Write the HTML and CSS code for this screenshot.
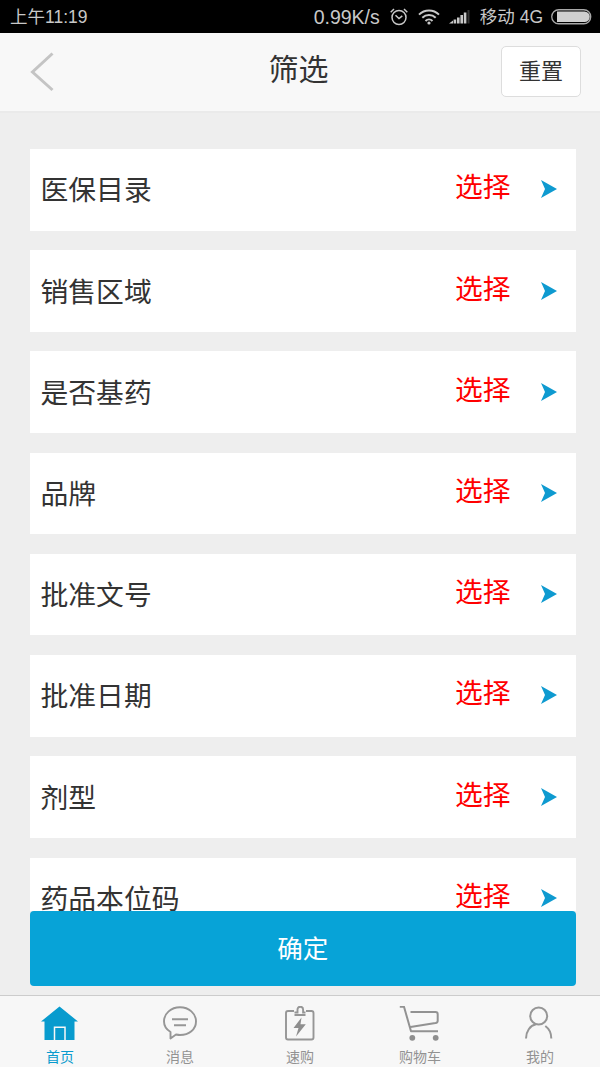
FILE: index.html
```html
<!DOCTYPE html>
<html lang="zh-CN">
<head>
<meta charset="utf-8">
<title>筛选</title>
<link rel="stylesheet" href="styles.css">
</head>
<body>
<div class="app">
  <div class="status">
    <span class="time">上午11:19</span>
    <span class="speed">0.99K/s</span>
    <svg class="alarm" width="18" height="18" viewBox="0 0 18 18" fill="none" stroke="#c8c8c8" stroke-width="1.5"><circle cx="9" cy="9.5" r="7"/><path d="M5.5 7.2 9 10.5l3.3-2.6M.7 4.2 4 1M17.3 4.2 14 1"/></svg>
    <svg class="wifi" width="22" height="16" viewBox="0 0 22 16" fill="none" stroke="#c8c8c8" stroke-width="2"><path d="M1 5.6a14.3 14.3 0 0 1 20 0M4.3 8.8a9.6 9.6 0 0 1 13.4 0M7.5 12a5 5 0 0 1 7 0"/><circle cx="11" cy="14" r="1.6" fill="#c8c8c8" stroke="none"/></svg>
    <svg class="signal" width="22" height="15" viewBox="0 0 22 15" fill="#c8c8c8"><path d="M0 14.500 4 11.500V14.500zM4.600 10.500h2.600v4H4.600zM8 8.500h2.600v6H8zM11.400 6H14v8.500h-2.600zM14.800 3.500h2.600v11h-2.600z"/><path fill="#333" d="M18.500 1h2v13.500h-2z"/></svg>
    <span class="carrier">移动 4G</span>
    <svg class="battery" width="41" height="16" viewBox="0 0 41 16"><rect x=".75" y=".75" width="39" height="14" rx="7" fill="none" stroke="#a8a8a8" stroke-width="1.300"/><path d="M6 2.500h27.500a5.300 5.300 0 0 1 0 10.600H6z" fill="#d0d0d0"/></svg>
  </div>
  <header class="header">
    <svg class="back" width="24" height="40" viewBox="0 0 24 40" fill="none" stroke="#c4c4c4" stroke-width="3"><path d="M22.500 1.500 2.500 20l20 18"/></svg>
    <h1 class="title">筛选</h1>
    <button class="reset">重置</button>
  </header>
  <main class="content">
    <div class="list">
      <div class="row"><span class="label">医保目录</span><span class="choose">选择</span><svg class="arrow" width="16" height="18" viewBox="0 0 16 18"><path d="M0 0 16 9 0 18 4 9z"/></svg></div>
      <div class="row"><span class="label">销售区域</span><span class="choose">选择</span><svg class="arrow" width="16" height="18" viewBox="0 0 16 18"><path d="M0 0 16 9 0 18 4 9z"/></svg></div>
      <div class="row"><span class="label">是否基药</span><span class="choose">选择</span><svg class="arrow" width="16" height="18" viewBox="0 0 16 18"><path d="M0 0 16 9 0 18 4 9z"/></svg></div>
      <div class="row"><span class="label">品牌</span><span class="choose">选择</span><svg class="arrow" width="16" height="18" viewBox="0 0 16 18"><path d="M0 0 16 9 0 18 4 9z"/></svg></div>
      <div class="row"><span class="label">批准文号</span><span class="choose">选择</span><svg class="arrow" width="16" height="18" viewBox="0 0 16 18"><path d="M0 0 16 9 0 18 4 9z"/></svg></div>
      <div class="row"><span class="label">批准日期</span><span class="choose">选择</span><svg class="arrow" width="16" height="18" viewBox="0 0 16 18"><path d="M0 0 16 9 0 18 4 9z"/></svg></div>
      <div class="row"><span class="label">剂型</span><span class="choose">选择</span><svg class="arrow" width="16" height="18" viewBox="0 0 16 18"><path d="M0 0 16 9 0 18 4 9z"/></svg></div>
      <div class="row"><span class="label">药品本位码</span><span class="choose">选择</span><svg class="arrow" width="16" height="18" viewBox="0 0 16 18"><path d="M0 0 16 9 0 18 4 9z"/></svg></div>
    </div>
    <button class="confirm">确定</button>
  </main>
  <nav class="tabs">
    <a class="tab active"><svg width="42" height="38" viewBox="0 0 42 38"><path fill="#089bce" d="M20.500 .5 39 15.500H35.500V34H5.500V15.500H2z"/><path fill="none" stroke="#f7f7f7" stroke-width="1.500" d="M15.500 34V21.300H26V34"/></svg><span>首页</span></a>
    <a class="tab"><svg width="42" height="38" viewBox="0 0 42 38" fill="none" stroke="#969696" stroke-width="1.900"><path d="M11.500 26C7.500 23.500 5 20 5 15.500 5 7.500 12 1.300 21 1.300s16 6.200 16 14.200-7 13.500-16 13.500c-1.500 0-2.500-.2-4-.5l-5.500 4z" stroke-linejoin="round"/><path d="M13 13.200h16M15 19.300h12"/></svg><span>消息</span></a>
    <a class="tab"><svg width="42" height="38" viewBox="0 0 42 38" fill="none" stroke="#969696" stroke-width="1.900"><path d="M15 5H9a2 2 0 0 0-2 2v24.500a2 2 0 0 0 2 2h23.500a2 2 0 0 0 2-2V7a2 2 0 0 0-2-2H27M15.500 9h11M15.500 6.500h3V3.500a2.800 2.800 0 0 1 5.600 0v3h2.400"/><path d="M22.500 11.500 14.500 22h5L17 30.500l9.800-12.200h-5.300z" fill="#8e8e8e" stroke="none"/></svg><span>速购</span></a>
    <a class="tab"><svg width="42" height="38" viewBox="0 0 42 38" fill="none" stroke="#929292" stroke-width="2" stroke-linejoin="round"><path d="M.8 .8H5L12 25.200h27M11.500 6H36.500q2.200 0 2.200 2.200v6.500q0 2-2.200 2.400L11.500 21"/><circle cx="13.300" cy="31.800" r="2.900" fill="#8e8e8e" stroke="none"/><circle cx="36.700" cy="31.800" r="2.900" fill="#8e8e8e" stroke="none"/></svg><span>购物车</span></a>
    <a class="tab"><svg width="42" height="38" viewBox="0 0 42 38" fill="none" stroke="#969696" stroke-width="2"><circle cx="19.700" cy="10" r="8.500"/><path d="M7 32.500c0-7 4-13 10-14.200M26.300 20c3.500 2.500 6 6.500 6 12.500"/></svg><span>我的</span></a>
  </nav>
</div>
</body>
</html>
```
FILE: styles.css
```css
* { box-sizing: border-box; }
body { margin: 0; background: #eee; font-family: "Noto Sans CJK SC", sans-serif; color: #333; }
.app { width: 600px; height: 1067px; display: flex; flex-direction: column; overflow: hidden; }

.status { flex: none; height: 33px; padding: 0 8px 0 10px; display: flex; align-items: center; background: #000; color: #c8c8c8; font: 17.5px/33px "Liberation Sans", "Noto Sans CJK SC", sans-serif; }
.status span { white-space: nowrap; }
.status svg { flex: none; display: block; }
.time { flex: 1; padding-top: 1px; }
.speed { font-size: 19.5px; padding-top: 1px; }
.alarm { margin-left: 10px; }
.wifi { margin-left: 10px; }
.signal { margin-left: 9px; }
.carrier { margin-left: 9px; padding-top: 1px; font-size: 17.5px; }
.battery { margin-left: 8px; }

.header { flex: none; height: 80px; padding: 0 19px 0 30px; display: grid; grid-template-columns: 80px 1fr 80px; align-items: center; background: #f8f8f8; border-bottom: 2px solid #eaeaea; }
.title { margin: 0 0 11px; padding-right: 14px; text-align: center; font-size: 30px; font-weight: 400; line-height: 44px; }
.reset { height: 51px; margin: 0 0 1px; padding: 0 0 4px; border: 1px solid #ddd; border-radius: 5px; background: #fff; color: #333; font: 22px/45px "Noto Sans CJK SC", sans-serif; }

.content { flex: 1; min-height: 0; padding: 36px 24.500px 9px 30px; display: flex; flex-direction: column; background: #eee; }
.list { flex: 1; min-height: 0; overflow: hidden; display: flex; flex-direction: column; gap: 19.700px; }
.row { flex: none; height: 81.550px; padding: 0 18.500px 0 10.500px; display: flex; align-items: center; background: #fff; font-size: 27.800px; line-height: 40px; }
.label { flex: 1; margin-bottom: 3px; }
.choose { margin: 0 30.500px 9px 0; color: #f00; }
.arrow { display: block; margin-bottom: 1px; fill: #0e9ad0; }
.confirm { flex: none; height: 75px; padding: 0 0 3px; border: 0; border-radius: 4px; background: #07a3d7; color: #fff; font: 25.500px/72px "Noto Sans CJK SC", sans-serif; }

.tabs { flex: none; height: 72px; border-top: 1px solid #ccc; display: grid; grid-template-columns: repeat(5, 1fr); background: #f7f7f7; }
.tab { padding-top: 10px; display: flex; flex-direction: column; align-items: center; color: #929292; font-size: 14px; line-height: 20px; }
.tab svg { display: block; margin-bottom: 2px; }
.tab.active { color: #089bce; }
```
